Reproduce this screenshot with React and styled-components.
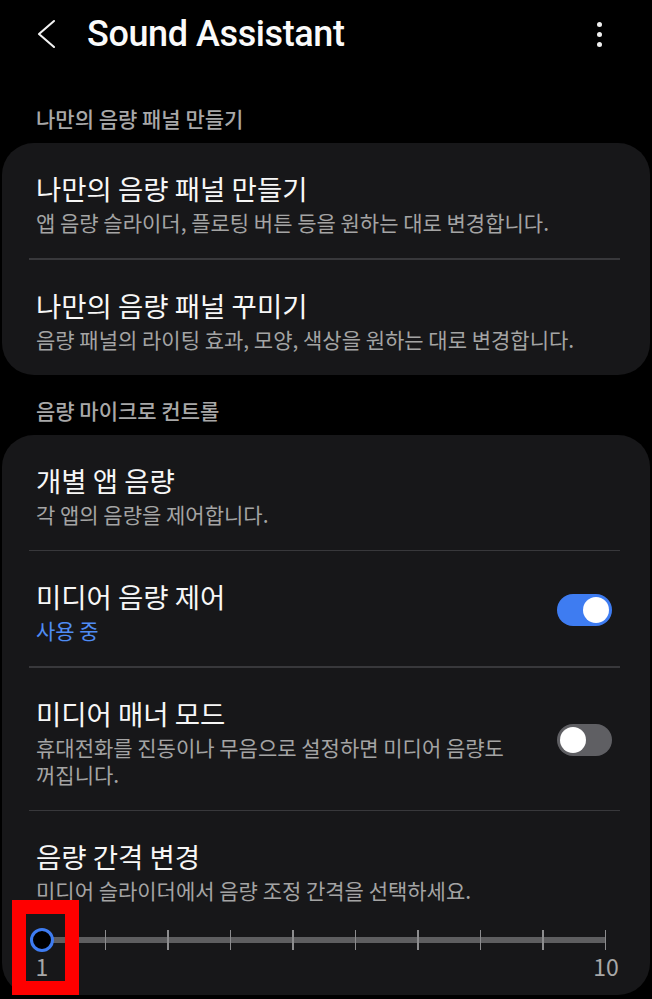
import React from "react";
import styled, { createGlobalStyle } from "styled-components";

const Global = createGlobalStyle`
  html, body { margin: 0; padding: 0; background: #000; }
  body { font-family: "Noto Sans CJK KR", "Noto Sans", sans-serif; }
  * { box-sizing: border-box; }
`;

const Page = styled.div`
  width: 652px;
  height: 999px;
  background: #000;
  overflow: hidden;
`;

const AppBar = styled.div`
  height: 68px;
  display: flex;
  align-items: center;
  padding: 0 0 0 30px;
`;

const BackButton = styled.div`
  width: 34px;
  height: 34px;
  display: flex;
  align-items: center;
  justify-content: center;
  margin-right: 23px;
`;

const Title = styled.h1`
  margin: 0;
  flex: 1;
  font-family: Roboto, "Noto Sans", sans-serif;
  font-weight: 500;
  font-size: 36px;
  line-height: 36px;
  letter-spacing: -0.4px;
  color: #fafafa;
`;

const MoreButton = styled.div`
  width: 24px;
  height: 34px;
  margin-right: 41px;
  display: flex;
  flex-direction: column;
  align-items: center;
  justify-content: center;
  gap: 5px;
`;

const Dot = styled.span`
  width: 5px;
  height: 5px;
  border-radius: 50%;
  background: #f0f0f0;
`;

const SectionLabel = styled.div`
  padding: ${(p) => (p.$first ? "36px" : "21px")} 36px 11px;
  font-size: 21px;
  line-height: 28px;
  font-weight: 500;
  color: #a8a8a8;
`;

const Card = styled.div`
  margin: 0 2px;
  background: #171719;
  border-radius: 32px;
`;

const Row = styled.div`
  display: flex;
  align-items: center;
  padding: 25px 38px ${(p) => (p.$flush ? "0" : "22px")} 34px;
`;

const RowText = styled.div`
  flex: 1;
  min-width: 0;
`;

const RowTitle = styled.div`
  font-size: 27.5px;
  line-height: 41px;
  color: #f7f7f7;
  font-weight: 400;
`;

const RowSub = styled.div`
  font-size: 21px;
  line-height: 27px;
  color: ${(p) => (p.$accent ? "#4f8cf4" : "#a4a4a4")};
  padding-right: ${(p) => (p.$narrow ? "30px" : "0")};
`;

const Divider = styled.div`
  height: 1.5px;
  margin: 0 30px 0 27px;
  background: #38383b;
`;

const Toggle = styled.div`
  width: 55px;
  height: 32px;
  border-radius: 16px;
  background: ${(p) => (p.$on ? "#3e7cf1" : "#5f5f63")};
  display: flex;
  align-items: center;
  justify-content: ${(p) => (p.$on ? "flex-end" : "flex-start")};
  padding: 0 3px;
  flex-shrink: 0;
`;

const Knob = styled.span`
  width: 26px;
  height: 26px;
  border-radius: 50%;
  background: #ffffff;
`;

const SliderArea = styled.div`
  position: relative;
  padding: 26px 44px 11px 40px;
`;

const Track = styled.div`
  position: relative;
  height: 20px;
  display: flex;
  align-items: center;
  justify-content: space-between;
`;

const TrackLine = styled.div`
  position: absolute;
  left: 0;
  right: 0;
  top: 7px;
  height: 6px;
  background: #5e5e60;
`;

const Tick = styled.span`
  position: relative;
  width: 1.5px;
  height: 20px;
  background: #8c8c8e;
  visibility: ${(p) => (p.$hidden ? "hidden" : "visible")};
`;

const Thumb = styled.span`
  position: absolute;
  left: -12px;
  top: -2px;
  width: 24px;
  height: 24px;
  border-radius: 50%;
  border: 3.5px solid #3e7cf1;
  background: #000;
`;

const Labels = styled.div`
  display: flex;
  justify-content: space-between;
  margin: 0 -20px 2px;
`;

const Label = styled.span`
  width: 40px;
  text-align: center;
  font-size: 23px;
  line-height: 32px;
  color: #a8a8a8;
`;

const Highlight = styled.div`
  position: absolute;
  left: 10px;
  top: -4px;
  width: 67px;
  height: 95px;
  border: 14px solid #ff0000;
  pointer-events: none;
`;

function Item({ title, sub, accent, toggle, narrow }) {
  return (
    <Row>
      <RowText>
        <RowTitle>{title}</RowTitle>
        {sub && (
          <RowSub $accent={accent} $narrow={narrow}>
            {sub}
          </RowSub>
        )}
      </RowText>
      {toggle !== undefined && (
        <Toggle $on={toggle}>
          <Knob />
        </Toggle>
      )}
    </Row>
  );
}

export default function App() {
  const ticks = Array.from({ length: 10 }, (_, i) => i);
  return (
    <Page>
      <Global />
      <AppBar>
        <BackButton>
          <svg width="22" height="30" viewBox="0 0 22 30" fill="none">
            <polyline
              points="18,2 3,15 18,28"
              stroke="#f2f2f2"
              strokeWidth="2.1"
              strokeLinecap="round"
              strokeLinejoin="round"
            />
          </svg>
        </BackButton>
        <Title>Sound Assistant</Title>
        <MoreButton>
          <Dot />
          <Dot />
          <Dot />
        </MoreButton>
      </AppBar>

      <SectionLabel $first>나만의 음량 패널 만들기</SectionLabel>
      <Card>
        <Item
          title="나만의 음량 패널 만들기"
          sub="앱 음량 슬라이더, 플로팅 버튼 등을 원하는 대로 변경합니다."
        />
        <Divider />
        <Item
          title="나만의 음량 패널 꾸미기"
          sub="음량 패널의 라이팅 효과, 모양, 색상을 원하는 대로 변경합니다."
        />
      </Card>

      <SectionLabel>음량 마이크로 컨트롤</SectionLabel>
      <Card>
        <Item title="개별 앱 음량" sub="각 앱의 음량을 제어합니다." />
        <Divider />
        <Item title="미디어 음량 제어" sub="사용 중" accent toggle={true} />
        <Divider />
        <Item
          title="미디어 매너 모드"
          sub="휴대전화를 진동이나 무음으로 설정하면 미디어 음량도 꺼집니다."
          toggle={false}
          narrow
        />
        <Divider />
        <Row $flush>
          <RowText>
            <RowTitle>음량 간격 변경</RowTitle>
            <RowSub>미디어 슬라이더에서 음량 조정 간격을 선택하세요.</RowSub>
          </RowText>
        </Row>
        <SliderArea>
          <Track>
            <TrackLine />
            {ticks.map((i) => (
              <Tick key={i} $hidden={i === 0} />
            ))}
            <Thumb />
          </Track>
          <Labels>
            <Label>1</Label>
            <Label>10</Label>
          </Labels>
          <Highlight />
        </SliderArea>
      </Card>
    </Page>
  );
}
